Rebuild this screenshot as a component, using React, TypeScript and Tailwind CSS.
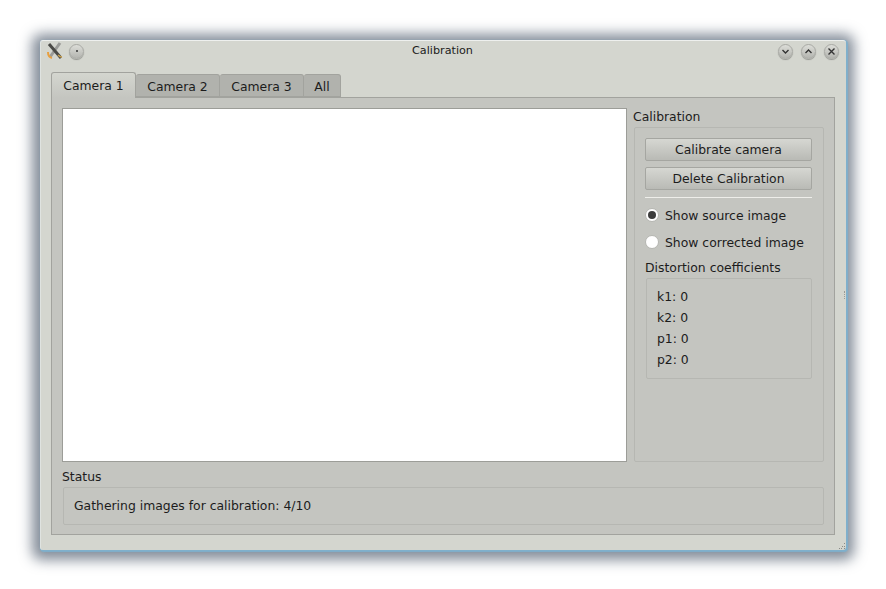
import React from "react";

const TitleButton = ({ children }: { children: React.ReactNode }) => (
  <div className="w-[15px] h-[15px] rounded-full border border-[#a9aaa5] bg-gradient-to-b from-[#dcddd8] to-[#b4b5b0] shadow-[0_1px_1px_rgba(0,0,0,0.3)] flex items-center justify-center">
    {children}
  </div>
);

const Tab = ({ label, width, active }: { label: string; width: string; active?: boolean }) =>
  active ? (
    <div className={`${width} h-[26px] -mb-px z-10 rounded-t-[3px] border border-b-0 border-[#a2a39e] bg-gradient-to-b from-[#d4d6cf] to-[#c4c5c0] flex items-center justify-center pt-[2px] text-[12.4px] text-[#1c1c1c]`}>
      {label}
    </div>
  ) : (
    <div className={`${width} h-[23px] rounded-t-[3px] border border-l-0 border-[#a2a39e] bg-[#b1b2ad] flex items-center justify-center pt-[3px] text-[12.4px] text-[#1c1c1c]`}>
      {label}
    </div>
  );

const PushButton = ({ label }: { label: string }) => (
  <div className="h-[23px] rounded-[2px] border border-[#a5a6a1] bg-gradient-to-b from-[#d6d7d2] to-[#b9bab5] flex items-center justify-center pt-[2px] text-[12.4px] text-[#1c1c1c]">
    {label}
  </div>
);

const Radio = ({ label, checked }: { label: string; checked?: boolean }) => (
  <div className="flex items-center gap-[6px] h-[14px] text-[12.4px] text-[#1c1c1c]">
    <div className="w-[14px] h-[14px] rounded-full bg-white border border-[#b5b6b1] flex items-center justify-center">
      {checked && <div className="w-[8px] h-[8px] rounded-full bg-[#3c3c3c]" />}
    </div>
    <span className="mt-[2px]">{label}</span>
  </div>
);

export default function App() {
  return (
    <div className="w-[886px] h-[589px] bg-white pl-[40px] pt-[40px] font-['DejaVu_Sans',sans-serif] overflow-hidden">
      <div className="relative w-[806px] h-[510px] rounded-[3px] bg-[#d4d6cf] border-l border-l-[#dfe3e0] border-t border-t-[#eef0ee] shadow-[1px_1px_1px_1px_#7fb0cc,0_2px_13px_8px_rgba(50,65,85,0.6)] flex flex-col">
        {/* title bar */}
        <div className="h-[20px] relative flex items-center pl-[5px] pr-[7px]">
          <svg width="18" height="18" viewBox="0 0 18 18">
            <path d="M14 1 L4 15" stroke="#9a9b98" strokeWidth="3" />
            <path d="M3 2 L15 16" stroke="#4a4a46" strokeWidth="3" />
            <path d="M2 10 Q2 15 6 16" stroke="#e8a040" strokeWidth="2" fill="none" />
            <path d="M12 13 Q14 15 16 15" stroke="#c8a050" strokeWidth="1.5" fill="none" />
          </svg>
          <div className="ml-[5px]">
            <TitleButton>
              <div className="w-[2px] h-[2px] rounded-full bg-[#333]" />
            </TitleButton>
          </div>
          <div className="absolute inset-x-0 top-[2px] text-center text-[11.2px] leading-[16px] text-[#1c1c1c] pr-[2px]">Calibration</div>
          <div className="ml-auto flex gap-[8px]">
            <TitleButton>
              <svg width="9" height="9" viewBox="0 0 9 9"><path d="M1.5 3 L4.5 6 L7.5 3" stroke="#333" strokeWidth="1.4" fill="none" /></svg>
            </TitleButton>
            <TitleButton>
              <svg width="9" height="9" viewBox="0 0 9 9"><path d="M1.5 6 L4.5 3 L7.5 6" stroke="#333" strokeWidth="1.4" fill="none" /></svg>
            </TitleButton>
            <TitleButton>
              <svg width="9" height="9" viewBox="0 0 9 9"><path d="M1.5 1.5 L7.5 7.5 M7.5 1.5 L1.5 7.5" stroke="#333" strokeWidth="1.4" fill="none" /></svg>
            </TitleButton>
          </div>
        </div>

        {/* tabs */}
        <div className="pl-[10px] pr-[11px] mt-[11px] flex-1 flex flex-col">
          <div className="flex items-end">
            <Tab label="Camera 1" width="w-[85px]" active />
            <Tab label="Camera 2" width="w-[84px]" />
            <Tab label="Camera 3" width="w-[84px]" />
            <Tab label="All" width="w-[37px]" />
          </div>
          <div className="h-[438px] border border-[#a2a39e] bg-[#c4c5c0] pl-[10px] pr-[10px] pt-[10px] flex flex-col">
            <div className="flex h-[354px]">
              <div className="w-[565px] bg-white border border-[#9c9d98]" />
              <div className="ml-[6px] flex-1 flex flex-col">
                <div className="h-[19px] pt-px text-[12.4px] leading-[16px] text-[#1c1c1c]">Calibration</div>
                <div className="ml-px flex-1 border border-[#b6b7b2] rounded-[2px] pl-[10px] pr-[11px] pt-[10px] flex flex-col">
                  <PushButton label="Calibrate camera" />
                  <div className="mt-[6px]">
                    <PushButton label="Delete Calibration" />
                  </div>
                  <div className="mt-[7px] h-px bg-[#eeeeea]" />
                  <div className="mt-[10px]">
                    <Radio label="Show source image" checked />
                  </div>
                  <div className="mt-[13px]">
                    <Radio label="Show corrected image" />
                  </div>
                  <div className="mt-[11px] h-[18px] text-[12.4px] leading-[16px] text-[#1c1c1c]">Distortion coefficients</div>
                  <div className="ml-px h-[101px] border border-[#b6b7b2] rounded-[2px] pl-[10px] pt-[7px] text-[12.4px] leading-[21px] text-[#1c1c1c]">
                    <div>k1: 0</div>
                    <div>k2: 0</div>
                    <div>p1: 0</div>
                    <div>p2: 0</div>
                  </div>
                </div>
              </div>
            </div>
            <div className="mt-[7px] h-[18px] text-[12.4px] leading-[16px] text-[#1c1c1c]">Status</div>
            <div className="ml-px h-[38px] border border-[#b6b7b2] rounded-[2px] pl-[10px] flex items-center text-[12.4px] text-[#1c1c1c]">
              Gathering images for calibration: 4/10
            </div>
          </div>
        </div>

        {/* splitter and resize grip */}
        <div className="absolute right-0 top-[250px] w-[2px] h-[8px] border-l border-dotted border-[#9a9b96]" />
        <svg className="absolute right-0 bottom-0" width="8" height="8" viewBox="0 0 8 8">
          <rect x="6" y="1" width="1" height="1" fill="#8a8b86" />
          <rect x="4" y="4" width="1" height="1" fill="#8a8b86" />
          <rect x="6" y="4" width="1" height="1" fill="#8a8b86" />
          <rect x="1" y="6" width="1" height="1" fill="#8a8b86" />
          <rect x="3" y="6" width="1" height="1" fill="#8a8b86" />
          <rect x="6" y="6" width="1" height="1" fill="#8a8b86" />
        </svg>
      </div>
    </div>
  );
}
